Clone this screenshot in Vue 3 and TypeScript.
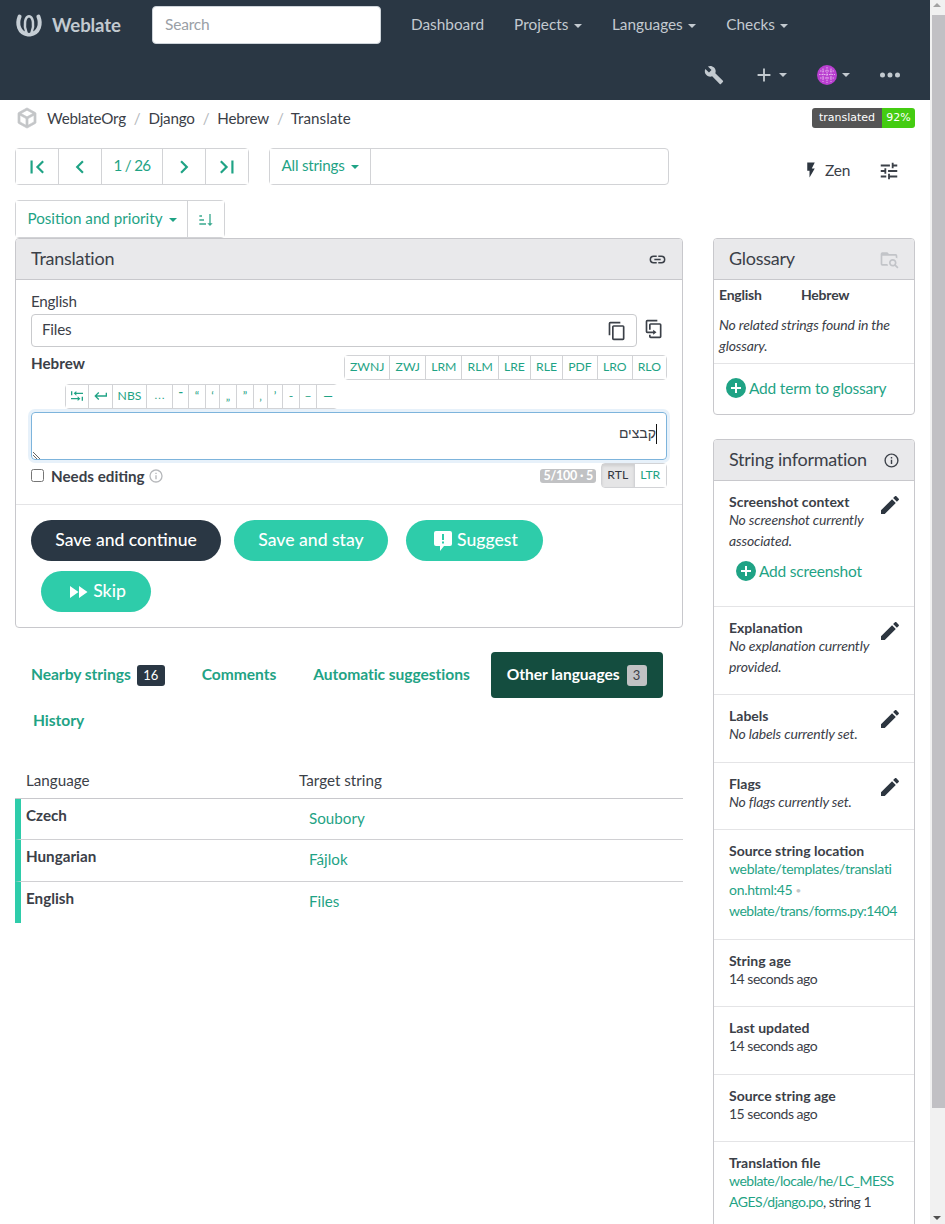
<script setup lang="ts">
const P = {
  first: 'M18.41,16.59L13.82,12L18.41,7.41L17,6L11,12L17,18L18.41,16.59M6,6H8V18H6V6Z',
  prev: 'M15.41,16.58L10.83,12L15.41,7.41L14,6L8,12L14,18L15.41,16.58Z',
  next: 'M8.59,16.58L13.17,12L8.59,7.41L10,6L16,12L10,18L8.59,16.58Z',
  last: 'M5.59,7.41L10.18,12L5.59,16.59L7,18L13,12L7,6L5.59,7.41M16,6H18V18H16V6Z',
  sort: 'M19 17H22L18 21L14 17H17V3H19M2 17H12V19H2M6 5V7H2V5M2 11H9V13H2V11Z',
  wrench: 'M22.7,19L13.6,9.9C14.5,7.6 14,4.9 12.1,3C10.1,1 7.1,0.6 4.7,1.7L9,6L6,9L1.6,4.7C0.4,7.1 0.9,10.1 2.9,12.1C4.8,14 7.5,14.5 9.8,13.6L18.9,22.7C19.3,23.1 19.9,23.1 20.3,22.7L22.6,20.4C23.1,20 23.1,19.3 22.7,19Z',
  plus: 'M19,13H13V19H11V13H5V11H11V5H13V11H19V13Z',
  dots: 'M16,12A2,2 0 0,1 18,10A2,2 0 0,1 20,12A2,2 0 0,1 18,14A2,2 0 0,1 16,12M10,12A2,2 0 0,1 12,10A2,2 0 0,1 14,12A2,2 0 0,1 12,14A2,2 0 0,1 10,12M4,12A2,2 0 0,1 6,10A2,2 0 0,1 8,12A2,2 0 0,1 6,14A2,2 0 0,1 4,12Z',
  flash: 'M7,2V13H10V22L17,10H13L17,2H7Z',
  tune: 'M3,17V19H9V17H3M3,5V7H13V5H3M13,21V19H21V17H13V15H11V21H13M7,9V11H3V13H7V15H9V9H7M21,13V11H11V13H21M15,9H17V7H21V5H17V3H15V9Z',
  link: 'M3.9,12C3.9,10.29 5.29,8.9 7,8.9H11V7H7A5,5 0 0,0 2,12A5,5 0 0,0 7,17H11V15.1H7C5.29,15.1 3.9,13.71 3.9,12M8,13H16V11H8V13M17,7H13V8.9H17C18.71,8.9 20.1,10.29 20.1,12C20.1,13.71 18.71,15.1 17,15.1H13V17H17A5,5 0 0,0 22,12A5,5 0 0,0 17,7Z',
  copy: 'M19,21H8V7H19M19,5H8A2,2 0 0,0 6,7V21A2,2 0 0,0 8,23H19A2,2 0 0,0 21,21V7A2,2 0 0,0 19,5M16,1H4A2,2 0 0,0 2,3V17H4V3H16V1Z',
  clone: 'M11,17H4A2,2 0 0,1 2,15V3A2,2 0 0,1 4,1H16V3H4V15H11V13L15,16L11,19V17M19,21V7H8V13H6V7A2,2 0 0,1 8,5H19A2,2 0 0,1 21,7V21A2,2 0 0,1 19,23H8A2,2 0 0,1 6,21V19H8V21H19Z',
  pencil: 'M20.71,7.04C21.1,6.65 21.1,6 20.71,5.63L18.37,3.29C18,2.9 17.35,2.9 16.96,3.29L15.12,5.12L18.87,8.87M3,17.25V21H6.75L17.81,9.93L14.06,6.18L3,17.25Z',
  info: 'M11,9H13V7H11M12,20C7.59,20 4,16.41 4,12C4,7.59 7.59,4 12,4C16.41,4 20,7.59 20,12C20,16.41 16.41,20 12,20M12,2A10,10 0 0,0 2,12A10,10 0 0,0 12,22A10,10 0 0,0 22,12A10,10 0 0,0 12,2M11,17H13V11H11V17Z',
  plusCircle: 'M17,13H13V17H11V13H7V11H11V7H13V11H17M12,2A10,10 0 0,0 2,12A10,10 0 0,0 12,22A10,10 0 0,0 22,12A10,10 0 0,0 12,2Z',
  ff: 'M13,6V18L21.5,12M4,18L12.5,12L4,6V18Z',
  suggest: 'M5 2H19A2 2 0 0 1 21 4V15A2 2 0 0 1 19 17H13L9 22V17H5A2 2 0 0 1 3 15V4A2 2 0 0 1 5 2ZM11 5V11H13V5ZM11 12.5V14.5H13V12.5Z',
  cube: 'M21,16.5C21,16.88 20.79,17.21 20.47,17.38L12.57,21.82C12.41,21.94 12.21,22 12,22C11.79,22 11.59,21.94 11.43,21.82L3.53,17.38C3.21,17.21 3,16.88 3,16.5V7.5C3,7.12 3.21,6.79 3.53,6.62L11.43,2.18C11.59,2.06 11.79,2 12,2C12.21,2 12.41,2.06 12.57,2.18L20.47,6.62C20.79,6.79 21,7.12 21,7.5V16.5M12,4.15L6.04,7.5L12,10.85L17.96,7.5L12,4.15M5,15.91L11,19.29V12.58L5,9.21V15.91M19,15.91V9.21L13,12.58V19.29L19,15.91Z',
  folder: 'M16.5 12C19 12 21 14 21 16.5C21 17.38 20.75 18.21 20.31 18.9L23.39 22L22 23.39L18.88 20.32C18.19 20.75 17.37 21 16.5 21C14 21 12 19 12 16.5C12 14 14 12 16.5 12M16.5 14C15.12 14 14 15.12 14 16.5C14 17.88 15.12 19 16.5 19C17.88 19 19 17.88 19 16.5C19 15.12 17.88 14 16.5 14M4 20A2 2 0 0 1 2 18V6A2 2 0 0 1 4 4H10L12 6H20A2 2 0 0 1 22 8V11.5A7 7 0 0 0 20 10.2V8H4V18H10.1A7 7 0 0 0 10.9 20Z',
  ret: 'M19,7V11H5.83L9.41,7.41L8,6L2,12L8,18L9.41,16.58L5.83,13H21V7H19Z',
  tab: 'M3 5H5V11H3ZM7 8L11 4.5V7H21V9H11V11.5ZM19 13H21V19H19ZM17 16L13 12.5V15H3V17H13V19.5Z'
}
const bidi = ['ZWNJ', 'ZWJ', 'LRM', 'RLM', 'LRE', 'RLE', 'PDF', 'LRO', 'RLO']
const quotes = [
  { c: '־', w: 16 }, { c: '“', w: 17 }, { c: '‘', w: 14 }, { c: '„', w: 17 }, { c: '”', w: 17 },
  { c: '‚', w: 14 }, { c: '’', w: 15 }, { c: '-', w: 17 }, { c: '–', w: 17 }, { c: '—', w: 22 }
]
const rows = [
  { lang: 'Czech', text: 'Soubory' },
  { lang: 'Hungarian', text: 'Fájlok' },
  { lang: 'English', text: 'Files' }
]
</script>

<template>
  <div class="root">
    <div class="page">
      <header class="nav">
        <div class="nav-row">
          <div class="brand">
            <svg class="logo" viewBox="0 0 28 24" stroke="#c6ced5" stroke-linecap="round">
              <path d="M4.6 3.6C1.6 11 3.6 20 13 21.6" stroke-width="4" />
              <path d="M23.4 3.6C26.4 11 24.4 20 15 21.6" stroke-width="4" />
              <path d="M11.4 19.4C8.4 12 10 3.6 14 3.2C18 3.6 19.6 12 16.6 19.4" stroke-width="2.5" />
            </svg>
            <span>Weblate</span>
          </div>
          <div class="search">Search</div>
          <nav class="menu">
            <span>Dashboard</span>
            <span>Projects<i class="caret"></i></span>
            <span>Languages<i class="caret"></i></span>
            <span>Checks<i class="caret"></i></span>
          </nav>
        </div>
        <div class="nav-row nav-tools">
          <svg class="wrench" viewBox="0 0 24 24"><path :d="P.wrench" /></svg>
          <span class="tool-plus"><svg viewBox="0 0 24 24"><path :d="P.plus" /></svg><i class="caret"></i></span>
          <span class="tool-avatar">
            <svg class="avatar" viewBox="0 0 20 20">
              <circle cx="10" cy="10" r="10" fill="#b93fd0" />
              <path d="M3 6H17M2 9.5H18M3 13H17M6 3.5V17M10 2V18M14 3.5V17" stroke="#ecc6f3" stroke-width=".8" stroke-dasharray="1.6 .9" fill="none" />
            </svg>
            <i class="caret"></i>
          </span>
          <svg class="dots" viewBox="0 0 24 24"><path :d="P.dots" /></svg>
        </div>
      </header>

      <main class="content">
        <div class="crumbs">
          <svg class="cube" viewBox="0 0 24 24"><path :d="P.cube" /></svg>
          <span>WeblateOrg</span><b>/</b><span>Django</span><b>/</b><span>Hebrew</span><b>/</b><span class="crumb-last">Translate</span>
          <div class="badge"><span class="badge-l">translated</span><span class="badge-r">92%</span></div>
        </div>

        <div class="toolbar">
          <div class="group pager">
            <button class="w43"><svg class="ic" viewBox="0 0 24 24"><path :d="P.first" /></svg></button>
            <button class="w43"><svg class="ic" viewBox="0 0 24 24"><path :d="P.prev" /></svg></button>
            <button class="w61"><span class="btxt">1 / 26</span></button>
            <button class="w43"><svg class="ic" viewBox="0 0 24 24"><path :d="P.next" /></svg></button>
            <button class="w42"><svg class="ic" viewBox="0 0 24 24"><path :d="P.last" /></svg></button>
          </div>
          <div class="group filter">
            <button class="w101"><span class="btxt">All strings<i class="caret"></i></span></button>
            <div class="filter-input"></div>
          </div>
          <div class="zen">
            <svg viewBox="0 0 24 24"><path :d="P.flash" /></svg><span>Zen</span>
          </div>
          <svg class="tune" viewBox="0 0 24 24"><path :d="P.tune" /></svg>
        </div>

        <div class="group sortbar">
          <button class="w172"><span class="btxt">Position and priority<i class="caret"></i></span></button>
          <button class="w36"><svg class="ic16" viewBox="0 0 24 24"><path :d="P.sort" /></svg></button>
        </div>

        <div class="columns">
          <div class="left">
            <section class="panel translation">
              <div class="panel-head">
                <h2>Translation</h2>
                <svg class="head-link" viewBox="0 0 24 24"><path :d="P.link" /></svg>
              </div>
              <div class="editor">
                <div class="lbl">English</div>
                <div class="source-row">
                  <div class="source">
                    <span>Files</span>
                    <svg viewBox="0 0 24 24"><path :d="P.copy" /></svg>
                  </div>
                  <svg class="clone" viewBox="0 0 24 24"><path :d="P.clone" /></svg>
                </div>
                <div class="hebrew-row">
                  <strong>Hebrew</strong>
                  <div class="group small">
                    <button v-for="b in bidi" :key="b">{{ b }}</button>
                  </div>
                </div>
                <div class="group small quotes">
                  <button class="q-tab"><svg viewBox="0 0 24 24"><path :d="P.tab" /></svg></button>
                  <button class="q-ret"><svg viewBox="0 0 24 24"><path :d="P.ret" /></svg></button>
                  <button class="q-nbs">NBS</button>
                  <button class="q-ell">…</button>
                  <button v-for="q in quotes" :key="q.c" :style="{ width: q.w + 'px' }">{{ q.c }}</button>
                </div>
                <div class="area">
                  <span class="caret-line"></span><span class="he" dir="rtl">קבצים</span>
                  <svg class="grip" viewBox="0 0 9 9"><path d="M1 2L8 9M1 5L5 9" stroke="#666" fill="none" /></svg>
                </div>
                <div class="status">
                  <span class="box"></span>
                  <strong>Needs editing</strong>
                  <svg class="mini" viewBox="0 0 24 24"><path :d="P.info" /></svg>
                  <span class="count">5/100 · 5</span>
                  <div class="group small dir">
                    <button class="on">RTL</button>
                    <button>LTR</button>
                  </div>
                </div>
              </div>
              <div class="actions">
                <div class="actions-row">
                  <button class="pill dark"><span>Save and continue</span></button>
                  <button class="pill stay"><span>Save and stay</span></button>
                  <button class="pill suggest"><svg viewBox="0 0 24 24"><path fill-rule="evenodd" :d="P.suggest" /></svg><span>Suggest</span></button>
                </div>
                <button class="pill skip"><svg viewBox="0 0 24 24"><path :d="P.ff" /></svg><span>Skip</span></button>
              </div>
            </section>

            <div class="tabs">
              <a class="tab"><span class="tab-t">Nearby strings</span><span class="count-badge">16</span></a>
              <a class="tab"><span class="tab-t">Comments</span></a>
              <a class="tab"><span class="tab-t">Automatic suggestions</span></a>
              <a class="tab active"><span class="tab-t">Other languages</span><span class="count-badge light">3</span></a>
              <a class="tab history"><span class="tab-t">History</span></a>
            </div>

            <div class="table">
              <div class="thead"><span>Language</span><span>Target string</span></div>
              <div v-for="r in rows" :key="r.lang" class="trow">
                <strong>{{ r.lang }}</strong>
                <a>{{ r.text }}</a>
              </div>
            </div>
          </div>

          <aside class="right">
            <section class="panel">
              <div class="panel-head">
                <h2>Glossary</h2>
                <svg class="head-ic faint" viewBox="0 0 24 24"><path :d="P.folder" /></svg>
              </div>
              <div class="gloss">
                <div class="gloss-head"><strong>English</strong><strong>Hebrew</strong></div>
                <em>No related strings found in the glossary.</em>
              </div>
              <div class="gloss-add">
                <a class="add"><svg viewBox="0 0 24 24"><path :d="P.plusCircle" /></svg>Add term to glossary</a>
              </div>
            </section>

            <section class="panel info-panel">
              <div class="panel-head">
                <h2>String information</h2>
                <svg class="head-info" viewBox="0 0 24 24"><path :d="P.info" /></svg>
              </div>
              <div class="sec first-sec">
                <div class="sec-text">
                  <h3>Screenshot context</h3>
                  <em>No screenshot currently associated.</em>
                  <a class="add shot"><svg viewBox="0 0 24 24"><path :d="P.plusCircle" /></svg>Add screenshot</a>
                </div>
                <svg class="pen" viewBox="0 0 24 24"><path :d="P.pencil" /></svg>
              </div>
              <div class="sec">
                <div class="sec-text"><h3>Explanation</h3><em>No explanation currently provided.</em></div>
                <svg class="pen" viewBox="0 0 24 24"><path :d="P.pencil" /></svg>
              </div>
              <div class="sec">
                <div class="sec-text"><h3>Labels</h3><em>No labels currently set.</em></div>
                <svg class="pen" viewBox="0 0 24 24"><path :d="P.pencil" /></svg>
              </div>
              <div class="sec">
                <div class="sec-text"><h3>Flags</h3><em>No flags currently set.</em></div>
                <svg class="pen" viewBox="0 0 24 24"><path :d="P.pencil" /></svg>
              </div>
              <div class="sec">
                <div class="sec-text">
                  <h3>Source string location</h3>
                  <p><a class="loose">weblate/templates/translati<br />on.html:45</a> <span class="dot">•</span><br /><a>weblate/trans/forms.py:1404</a></p>
                </div>
              </div>
              <div class="sec"><div class="sec-text"><h3>String age</h3><p>14 seconds ago</p></div></div>
              <div class="sec"><div class="sec-text"><h3>Last updated</h3><p>14 seconds ago</p></div></div>
              <div class="sec"><div class="sec-text"><h3>Source string age</h3><p>15 seconds ago</p></div></div>
              <div class="sec">
                <div class="sec-text">
                  <h3>Translation file</h3>
                  <p><a>weblate/locale/he/LC_MESS<br />AGES/django.po</a>, string 1</p>
                </div>
              </div>
            </section>
          </aside>
        </div>
      </main>
    </div>

    <div class="scrollbar">
      <i class="arrow up"></i>
      <div class="thumb"></div>
      <i class="arrow down"></i>
    </div>
  </div>
</template>

<style>
html, body { margin: 0; overflow: hidden; background: #fff; }
</style>

<style scoped>
* { box-sizing: border-box; }
.root {
  display: flex; width: 945px; height: 1224px; overflow: hidden;
  font-family: Lato, "Noto Sans", sans-serif; font-size: 15.2px; line-height: 20px; color: #3b4048; letter-spacing: -.22px;
}
.page { width: 930px; flex: none; }
button { font: inherit; letter-spacing: inherit; background: #fff; color: #1fa385; border: 0; padding: 0; }
svg { display: block; fill: currentColor; flex: none; }
a { color: #1fa385; }

.caret { display: inline-block; width: 0; height: 0; margin-left: 6px; vertical-align: 2px; border: 4px solid transparent; border-top-color: currentColor; border-bottom: 0; }

.nav { height: 100px; background: #2a3744; color: #c3cad0; letter-spacing: 0; }
.nav-row { height: 50px; display: flex; align-items: center; }
.brand { width: 137px; margin-left: 15px; display: flex; align-items: center; gap: 9px; font-size: 18.6px; font-weight: 700; letter-spacing: -.1px; }
.logo { width: 28px; height: 24px; fill: none; }
.search { width: 229px; height: 38px; padding-left: 12px; line-height: 34px; background: #fff; border: 1px solid #ced4da; border-radius: 4px; color: #9aa0a6; font-size: 15.5px; letter-spacing: -.2px; }
.menu { display: flex; gap: 30px; margin: -2px 0 0 30px; font-size: 15.35px; }
.menu .caret { margin-left: 5.5px; border-width: 4.5px 4.5px 0; }
.nav-tools { padding-left: 704px; }
.wrench { width: 20px; height: 20px; margin-right: 29px; }
.tool-plus { display: flex; align-items: center; width: 64px; }
.tool-plus svg { width: 22px; height: 22px; }
.tool-plus .caret { margin-left: 4px; }
.tool-avatar { display: flex; align-items: center; width: 58px; }
.tool-avatar .caret { margin-left: 5px; }
.avatar { width: 20px; height: 20px; }
.dots { width: 30px; height: 30px; }

.content { padding: 0 15px; }
.crumbs { height: 48px; padding-bottom: 13px; display: flex; align-items: center; }
.crumbs span { flex: none; }
.crumbs b { font-weight: 400; color: #b5b9bd; margin: 0 8px; }
.crumb-last { letter-spacing: .05px; margin-left: -1px; }
.cube { width: 24px; height: 24px; margin: 0 8px 0 0; color: #c4c6c8; stroke: currentColor; stroke-width: .7; }
.badge { margin-left: auto; display: flex; width: 103px; height: 20px; margin-top: 1px; border-radius: 3px; overflow: hidden; font: 11px/20px "DejaVu Sans", sans-serif; letter-spacing: 0; color: #fff; }
.badge-l { width: 70px; text-align: center; background: #555; }
.badge-r { width: 33px; text-align: center; background: #4c1; }

.group { display: flex; border: 1px solid #d2d3d6; border-radius: 4px; background: #fff; }
.group > button { display: flex; flex: none; align-items: center; justify-content: center; white-space: nowrap; border-right: 1px solid #d2d3d6; }
.group > button:last-child { border-right: 0; }
.btxt { margin-top: -3px; }

.toolbar { height: 37px; display: flex; align-items: stretch; }
.pager { width: 234px; }
.w43 { width: 43px; }
.w42 { width: 42px; }
.w61 { width: 61px; }
.w61 .btxt { letter-spacing: -.7px; }
.ic { width: 26px; height: 26px; }
.ic16 { width: 16px; height: 16px; color: #39a98f; margin-top: 2px; }
.filter { width: 400px; margin-left: 20px; }
.w101 { width: 101px; }
.filter-input { flex: 1; }
.zen { display: flex; align-items: center; margin-left: 133px; padding-top: 7px; height: 37px; }
.zen svg { width: 18px; height: 18px; margin-right: 5px; color: #2d3640; }
.zen span { font-size: 15.5px; }
.tune { width: 22px; height: 22px; margin: 12px 0 0 28px; color: #3b4048; }

.sortbar { width: 210px; height: 38px; margin-top: 15px; }
.w172 { width: 172px; padding-left: 1px; }
.w172 .btxt { letter-spacing: 0; }
.w36 { width: 36px; }

.columns { display: grid; grid-template-columns: 668px 202px; column-gap: 30px; }

.panel { border: 1px solid #c8c8cc; border-radius: 4px; background: #fff; }
.panel-head { height: 41px; padding: 0 15px; display: flex; align-items: center; justify-content: space-between; background: #e9e9eb; border-bottom: 1px solid #c8c8cc; border-radius: 3px 3px 0 0; }
h2 { margin: 0 0 3px; font-size: 18px; font-weight: 400; letter-spacing: -.25px; }
.head-ic { width: 20px; height: 20px; }
.head-link { width: 19px; height: 19px; }
.head-info { width: 17px; height: 17px; margin-right: -1px; }
.faint { color: #c2c4c8; }

.translation { height: 390px; }
.editor { padding: 11px 15px 0; height: 225px; border-bottom: 1px solid #e4e4e6; }
.lbl { height: 21px; }
.source-row { display: flex; align-items: center; margin-top: 2px; }
.source { width: 606px; height: 33px; padding: 0 9px 3px 10px; display: flex; align-items: center; justify-content: space-between; border: 1px solid #c9cacd; border-radius: 4px; }
.source svg { width: 20px; height: 20px; margin-top: 3px; }
.clone { width: 20px; height: 20px; margin: -3px 0 0 7px; }
.hebrew-row { display: flex; justify-content: space-between; margin-top: 8px; height: 25px; }
.hebrew-row strong { line-height: 16px; letter-spacing: 0; }
.small { font-size: 12.2px; height: 25px; letter-spacing: 0; }
.small > button { padding: 0 5.1px 2px; }
.quotes { width: 273px; margin: 4px 0 0 34px; }
.quotes > button { padding: 0 0 2px; }
.quotes svg { width: 16px; height: 16px; }
.quotes .q-tab { width: 23px; }
.quotes .q-ret { width: 24px; }
.quotes .q-nbs { width: 34px; }
.quotes .q-ell { width: 26px; font-family: "DejaVu Sans", sans-serif; font-size: 11px; }
.area { position: relative; height: 48px; margin-top: 3px; padding: 9px 9px 0 0; display: flex; justify-content: flex-end; border: 1px solid #7db4dc; border-radius: 4px; box-shadow: 0 0 0 3px rgba(120, 180, 230, .18); }
.he { font-family: "Liberation Sans", "DejaVu Sans", sans-serif; font-size: 14px; line-height: 22px; order: 1; letter-spacing: 0; }
.caret-line { order: 2; width: 1px; height: 20px; margin-top: 2px; background: #111; }
.grip { position: absolute; left: 0; bottom: 0; width: 9px; height: 9px; }
.status { display: flex; align-items: center; margin-top: 3px; height: 25px; }
.box { width: 13px; height: 13px; border: 1px solid #767676; border-radius: 2.5px; }
.status strong { margin-left: 7px; letter-spacing: 0; }
.mini { width: 16px; height: 16px; margin-left: 3px; color: #b5b7ba; }
.count { margin-left: auto; margin-right: 5px; padding: 0 3px; height: 14px; font-size: 12.5px; font-weight: 700; line-height: 14px; color: #fff; background: #c1c2c4; border-radius: 3px; }
.dir { width: 66px; }
.dir > button { flex: 1; }
.dir .on { background: #e5e5e6; color: #33383f; box-shadow: inset 0 2px 3px rgba(0, 0, 0, .1); }

.actions { padding: 15px 15px 0; }
.actions-row { display: flex; }
.pill { height: 41px; display: flex; align-items: center; justify-content: center; border-radius: 21px; font-size: 17.6px; font-weight: 500; letter-spacing: 0; background: #2eccaa; color: #fff; }
.pill span { margin-top: -2px; }
.pill svg { width: 24px; height: 24px; }
.dark { width: 190px; background: #2a3744; margin-right: 13px; }
.stay { width: 154px; margin-right: 18px; }
.suggest { width: 137px; }
.suggest svg { margin-right: 2px; }
.skip { width: 110px; margin: 10px 0 0 10px; }
.skip svg { margin-right: 3px; }

.tabs { height: 92px; display: flex; flex-wrap: wrap; margin-top: 24px; column-gap: 5px; }
.tab { height: 46px; display: flex; align-items: center; padding: 0 16px; font-weight: 700; font-size: 15.6px; letter-spacing: -.05px; border-radius: 4px; }
.tab-t { margin-top: -2px; }
.tab.active { background: #144d3f; color: #fff; }
.history { padding: 0 18px; }
.count-badge { margin-left: 6px; min-width: 28px; height: 21px; font-size: 13px; line-height: 21px; text-align: center; color: #fff; background: #2a3744; border-radius: 3px; font-weight: 400; }
.count-badge.light { min-width: 20px; margin-left: 7px; background: #c1c2c4; color: #3b4048; }

.table { margin-top: 20px; letter-spacing: 0; }
.thead { height: 35px; padding: 6px 0 0 11px; display: grid; grid-template-columns: 273px 1fr; border-bottom: 1px solid #c8c8cc; }
.trow { height: 41.3px; display: grid; grid-template-columns: 283px 1fr; padding-left: 5px; border-left: 6px solid #2eccaa; border-bottom: 1px solid #d0d0d3; }
.trow strong { padding-top: 6px; font-weight: 700; }
.trow a { padding-top: 9px; }
.trow:last-child { border-bottom: 0; }

.right { min-width: 0; }
.gloss { padding: 5px 5px 6px; height: 84px; border-bottom: 1px solid #e4e4e6; }
.gloss-head { display: grid; grid-template-columns: 82px 1fr; font-size: 14px; }
.gloss em { display: block; margin-top: 9px; font-size: 14px; line-height: 21px; letter-spacing: -.15px; }
.gloss-add { height: 50px; padding: 0 0 2px 12px; display: flex; align-items: center; }
.add { display: flex; align-items: center; gap: 1px; font-size: 15.5px; letter-spacing: -.2px; white-space: nowrap; }
.add svg { width: 24px; height: 24px; margin-left: -2px; }
.info-panel { margin-top: 24px; }
.sec { display: flex; justify-content: space-between; padding: 11px 12px 17.5px 15px; border-bottom: 1px solid #e4e4e6; }
.sec:last-child { border-bottom: 0; }
.sec-text { flex: none; width: 170px; font-size: 14px; letter-spacing: 0; }
h3 { margin: 0; font-size: 14px; line-height: 20px; font-weight: 700; }
.sec em, .sec p { display: block; margin: -3px 0 0; line-height: 21px; }
.sec em { max-width: 160px; letter-spacing: -.15px; }
.sec p { white-space: nowrap; letter-spacing: -.5px; }
.sec .loose { letter-spacing: -.3px; }
.dot { color: #c4c6c8; font-size: 10px; line-height: 0; vertical-align: 1px; }
.pen { width: 24px; height: 24px; margin: 1px 0 0 -24px; color: #2d3640; }
.first-sec { height: 125.5px; }
.shot { margin: 8px 0 0 7px; height: 24px; }

.scrollbar { width: 15px; height: 1224px; background: #f1f1f1; position: relative; }
.thumb { position: absolute; left: 2px; top: 15px; width: 13px; height: 1093px; background: #c1c0c4; }
.arrow { position: absolute; left: 3px; width: 0; height: 0; border: 4.5px solid transparent; }
.up { top: 3px; border-top: 0; border-bottom-color: #a3a3a3; }
.down { bottom: 4px; border-bottom: 0; border-top-color: #505050; }
</style>
